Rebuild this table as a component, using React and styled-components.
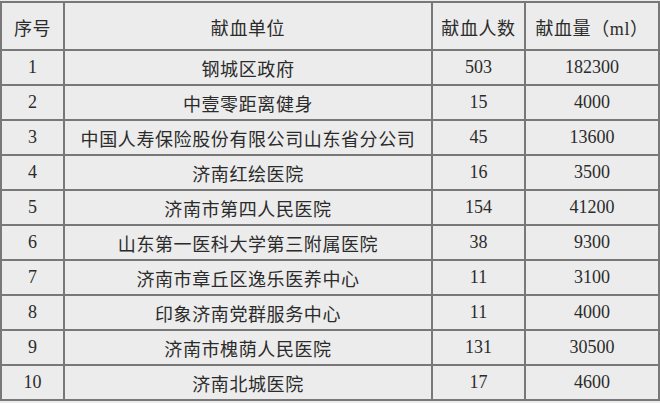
import React from 'react';
import styled, { createGlobalStyle } from 'styled-components';

const rows = [
  ['1', '钢城区政府', '503', '182300'],
  ['2', '中壹零距离健身', '15', '4000'],
  ['3', '中国人寿保险股份有限公司山东省分公司', '45', '13600'],
  ['4', '济南红绘医院', '16', '3500'],
  ['5', '济南市第四人民医院', '154', '41200'],
  ['6', '山东第一医科大学第三附属医院', '38', '9300'],
  ['7', '济南市章丘区逸乐医养中心', '11', '3100'],
  ['8', '印象济南党群服务中心', '11', '4000'],
  ['9', '济南市槐荫人民医院', '131', '30500'],
  ['10', '济南北城医院', '17', '4600'],
];

const GlobalStyle = createGlobalStyle`
  html, body {
    margin: 0;
    padding: 0;
    background: #ececec;
  }
`;

const Page = styled.div`
  width: 660px;
  height: 403px;
  padding: 1px 2px 0 0;
  box-sizing: border-box;
  background: #ececec;
`;

const Table = styled.table`
  width: 658px;
  border-collapse: collapse;
  table-layout: fixed;
  font-family: "Liberation Serif", "Noto Sans CJK SC", serif;
  font-size: 18px;
  color: #2b2b2b;
`;

const Cell = styled.td`
  border: 2px solid #787878;
  text-align: center;
  vertical-align: middle;
  padding: 0;
  white-space: nowrap;
  height: ${(p) => (p.$head ? '45px' : '33px')};
  letter-spacing: ${(p) => (p.$cjk ? '0.6px' : '0')};
`;

const HeadCell = styled(Cell).attrs({ as: 'th' })`
  font-weight: normal;
  padding-top: 1px;
`;

export default function App() {
  return (
    <Page>
      <GlobalStyle />
      <Table>
        <colgroup>
          <col style={{ width: 63 }} />
          <col style={{ width: 368 }} />
          <col style={{ width: 93 }} />
          <col style={{ width: 134 }} />
        </colgroup>
        <thead>
          <tr>
            <HeadCell $head $cjk>序号</HeadCell>
            <HeadCell $head $cjk>献血单位</HeadCell>
            <HeadCell $head $cjk>献血人数</HeadCell>
            <HeadCell $head $cjk>献血量（ml）</HeadCell>
          </tr>
        </thead>
        <tbody>
          {rows.map((r) => (
            <tr key={r[0]}>
              <Cell>{r[0]}</Cell>
              <Cell $cjk>{r[1]}</Cell>
              <Cell>{r[2]}</Cell>
              <Cell>{r[3]}</Cell>
            </tr>
          ))}
        </tbody>
      </Table>
    </Page>
  );
}
